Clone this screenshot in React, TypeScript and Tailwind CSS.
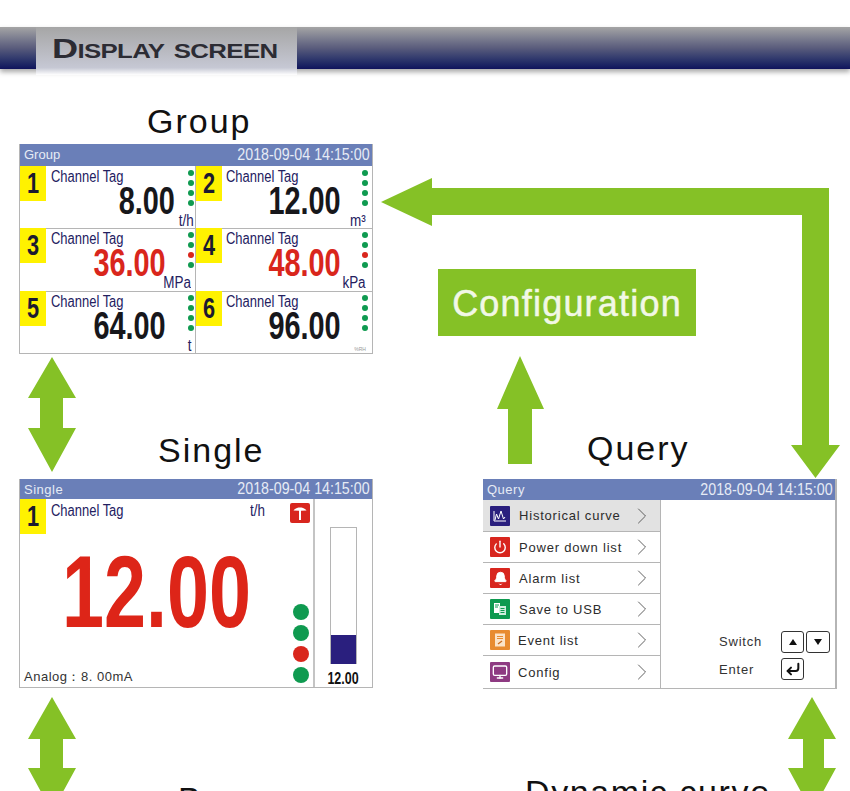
import { Bell, ChevronRight, CornerDownLeft, Monitor, Power } from "lucide-react"
import type { ReactNode } from "react"

const sans = "font-['Liberation_Sans',Arial,sans-serif]"

const cells = [
  { n: "1", value: "8.00", unit: "t/h", red: false, pad: "pr-[11px]", unitPad: "-mr-[8px]", dots: ["g", "g", "g", "g"], h: "h-[62px]", line: "" },
  { n: "2", value: "12.00", unit: "m³", red: false, pad: "pr-[21px]", unitPad: "-mr-[4px]", dots: ["g", "g", "g", "g"], h: "h-[62px]", line: "" },
  { n: "3", value: "36.00", unit: "MPa", red: true, pad: "pr-[20px]", unitPad: "-mr-[5px]", dots: ["g", "g", "r", "g"], h: "h-[63px]", line: "border-t border-[#b5b5b5]" },
  { n: "4", value: "48.00", unit: "kPa", red: true, pad: "pr-[21px]", unitPad: "-mr-[4px]", dots: ["g", "g", "r", "g"], h: "h-[63px]", line: "border-t border-[#b5b5b5]" },
  { n: "5", value: "64.00", unit: "t", red: false, pad: "pr-[20px]", unitPad: "-mr-[5px]", dots: ["g", "g", "g", "g"], h: "h-[62px]", line: "border-t border-[#b5b5b5]" },
  { n: "6", value: "96.00", unit: "%RH", red: false, pad: "pr-[21px]", unitPad: "-mr-[4px]", dots: ["g", "g", "g", "g"], h: "h-[62px]", line: "border-t border-[#b5b5b5]" },
]

const menu: { label: string; color: string; icon: ReactNode; active?: boolean; h: string; shift?: string }[] = [
  {
    label: "Historical curve",
    color: "bg-[#2a1f7e]",
    active: true,
    h: "h-[32px]",
    icon: (
      <svg viewBox="0 0 20 20" className="size-5" fill="none" stroke="#fff" strokeWidth="1">
        <path d="M4 5v10h12" />
        <path d="M5 14l1.500-6 2 5 2.500-8 2.500 8 1.500-2" />
      </svg>
    ),
  },
  {
    label: "Power down list",
    color: "bg-[#d8261e]",
    h: "h-[31px]",
    icon: <Power className="size-[14px] text-white" strokeWidth={2.4} />,
  },
  {
    label: "Alarm list",
    color: "bg-[#d8261e]",
    h: "h-[31px]",
    icon: <Bell className="size-[15px] fill-white text-white" strokeWidth={1.5} />,
  },
  {
    label: "Save to USB",
    color: "bg-[#0e9a50]",
    h: "h-[31px]",
    icon: (
      <svg viewBox="0 0 20 20" className="size-5">
        <rect x="4" y="4" width="6" height="10" fill="#fff" />
        <rect x="9" y="7" width="7" height="9" fill="#cfeedd" />
        <path d="M5 6h4M5 8h3M10.500 9.500h4M10.500 11.500h4M10.500 13.500h4" stroke="#0e9a50" strokeWidth="1" />
      </svg>
    ),
  },
  {
    label: "Event list",
    color: "bg-[#e88b30]",
    h: "h-[31px]",
    shift: "-translate-x-[1px]",
    icon: (
      <svg viewBox="0 0 20 20" className="size-5">
        <rect x="5" y="3.500" width="10" height="13" fill="#fbe3c8" />
        <path d="M7 6.500h6M7 8.500h6" stroke="#e88b30" strokeWidth="1" />
        <path d="M8 14l4-3" stroke="#c9681a" strokeWidth="1.200" />
      </svg>
    ),
  },
  {
    label: "Config",
    color: "bg-[#8e3a82]",
    h: "h-[32px]",
    shift: "-translate-x-[1px]",
    icon: <Monitor className="size-[16px] text-white" strokeWidth={2} />,
  },
]

function TitleBar({ title, h, titleClass }: { title: string; h: string; titleClass: string }) {
  return (
    <div className={`flex items-center justify-between bg-[#6a7fb8] pr-[2px] pl-[4px] text-[#e6ebf5] ${h}`}>
      <span className={`${sans} ${titleClass}`}>{title}</span>
      <span className={`${sans} inline-block origin-right scale-x-[0.89] text-[16px] whitespace-nowrap`}>2018-09-04 14:15:00</span>
    </div>
  )
}

function Badge({ n }: { n: string }) {
  return (
    <div className="flex h-[35px] w-[26px] shrink-0 items-center justify-center bg-[#fff200]">
      <span className={`${sans} inline-block scale-x-75 text-[29px] font-bold text-[#1c1a30]`}>{n}</span>
    </div>
  )
}

function Tag() {
  return (
    <span className={`${sans} inline-block origin-left scale-x-[0.81] text-[16px] leading-[18px] whitespace-nowrap text-[#23205f]`}>
      Channel Tag
    </span>
  )
}

function Cell({ cell, right }: { cell: (typeof cells)[number]; right: boolean }) {
  return (
    <div className={`${cell.h} ${cell.line} ${right ? "" : "border-r border-r-[#b5b5b5]"}`}>
      <div className={`flex h-full ${cell.line ? "-mt-[1px]" : ""}`}>
        <Badge n={cell.n} />
        <div className={`flex min-w-0 flex-1 flex-col ${right ? "pl-[4px]" : "pl-[5px]"}`}>
          <div className="-mt-[2px] h-[19px]">
            <Tag />
          </div>
          <div className={`h-[30px] text-right ${cell.pad}`}>
            <span
              className={`inline-block origin-right scale-x-[0.74] ${sans} text-[39px] leading-[36px] font-bold ${cell.red ? "text-[#d9261c]" : "text-[#17171b]"}`}
            >
              {cell.value}
            </span>
          </div>
          <div className={`mt-auto pb-[1px] text-right leading-[14px] ${cell.unitPad}`}>
            <span
              className={`${sans} inline-block origin-right scale-x-[0.84] ${cell.n === "6" ? "text-[6px] text-[#999]" : "text-[16px] text-[#23205f]"}`}
            >
              {cell.unit}
            </span>
          </div>
        </div>
        <div className={`flex shrink-0 flex-col gap-[4px] pt-[4px] ${right ? "w-[10px]" : "w-[9px] pl-[2px]"}`}>
          {cell.dots.map((d, i) => (
            <div key={i} className={`size-[6px] rounded-full ${d === "r" ? "bg-[#d9261c]" : "bg-[#0f9a50]"}`} />
          ))}
        </div>
      </div>
    </div>
  )
}

function GroupScreen() {
  return (
    <div className="absolute top-[144px] left-[19px] w-[354px] border-x border-b border-[#b5b5b5] bg-white">
      <TitleBar title="Group" h="h-[22px]" titleClass="text-[13px]" />
      <div className="grid grid-cols-[176px_176px]">
        {cells.map((c, i) => (
          <Cell key={c.n} cell={c} right={i % 2 === 1} />
        ))}
      </div>
    </div>
  )
}

function SingleScreen() {
  return (
    <div className="absolute top-[479px] left-[19px] w-[354px] border-x border-b border-[#b5b5b5] bg-white">
      <TitleBar title="Single" h="h-[20px]" titleClass="text-[13px] tracking-[0.5px] pt-[1px]" />
      <div className="flex h-[188px]">
        <div className="flex w-[295px] flex-col border-r-2 border-[#c4c4c4]">
          <div className="flex h-[35px]">
            <Badge n="1" />
            <div className="-mt-[1px] w-[204px] pl-[5px]">
              <Tag />
            </div>
            <div className="-mt-[1px] w-[40px]">
              <span className={`${sans} inline-block origin-left scale-x-[0.84] text-[16px] leading-[18px] text-[#23205f]`}>t/h</span>
            </div>
            <div className="mt-[4px] flex size-[20px] items-center justify-center rounded-[2px] bg-[#d8261e]">
              <svg viewBox="0 0 20 20" className="size-5" fill="#fff">
                <path d="M3.500 7.500c2-2.500 4.500-3 6.500-3s4.500 .5 6.500 3l-5.500 .3V17H9V7.800z" />
              </svg>
            </div>
          </div>
          <div className="flex min-h-0 flex-1">
            <div className="flex min-w-0 flex-1 flex-col">
              <div className="mt-[8px] h-[100px] pl-[42px]">
                <span className={`inline-block origin-left scale-x-[0.74] ${sans} text-[102px] leading-[100px] font-bold text-[#dd2518]`}>
                  12.00
                </span>
              </div>
              <div className={`${sans} mt-auto pb-[3px] pl-[4px] text-[13px] leading-[15px] tracking-[0.5px] text-[#333]`}>Analog：8. 00mA</div>
            </div>
            <div className="flex w-[24px] shrink-0 flex-col gap-[5px] pt-[70px] pl-[4px]">
              {["g", "g", "r", "g"].map((d, i) => (
                <div key={i} className={`size-[16px] rounded-full ${d === "r" ? "bg-[#d9261c]" : "bg-[#0f9a50]"}`} />
              ))}
            </div>
          </div>
        </div>
        <div className="flex flex-1 flex-col items-center pt-[28px]">
          <div className="flex h-[137px] w-[27px] flex-col justify-end border-x border-t border-[#b5b5b5]">
            <div className="h-[29px] bg-[#2a1f7e]" />
          </div>
          <div className="mt-[6px] leading-[16px]">
            <span className={`${sans} inline-block scale-x-[0.78] text-[16px] font-bold text-[#111]`}>12.00</span>
          </div>
        </div>
      </div>
    </div>
  )
}

function QueryScreen() {
  return (
    <div className="absolute top-[479px] left-[483px] w-[354px] border-r-2 border-b border-[#b5b5b5] bg-white">
      <TitleBar title="Query" h="h-[21px]" titleClass="text-[13px] tracking-[0.5px]" />
      <div className="flex h-[188px]">
        <div className="w-[178px] border-r border-[#b5b5b5]">
          {menu.map((m) => (
            <div
              key={m.label}
              className={`flex items-center border-b border-[#b5b5b5] pl-[7px] last:border-b-0 ${m.h} ${m.active ? "bg-[#e2e2e2]" : "bg-white"}`}
            >
              <div className={`flex size-5 shrink-0 items-center justify-center rounded-[1px] ${m.color}`}>{m.icon}</div>
              <span className={`${sans} ml-[9px] w-[113px] pt-[1px] text-[13px] tracking-[0.8px] whitespace-nowrap text-[#2c2c2c] ${m.shift ?? ""}`}>{m.label}</span>
              <ChevronRight className="-ml-[4px] size-[28px] text-[#555]" strokeWidth={0.8} />
            </div>
          ))}
        </div>
        <div className="flex flex-1 flex-col items-end justify-end gap-[5px] pr-[5px] pb-[8px]">
          <div className="flex items-center">
            <span className={`${sans} w-[62px] text-[13px] tracking-[0.8px] text-[#333]`}>Switch</span>
            <div className="flex gap-[2px]">
              <div className="flex h-[22px] w-[23px] items-center justify-center rounded-[3px] border-[1.5px] border-[#333]">
                <div className="size-0 border-x-[4px] border-b-[6px] border-x-transparent border-b-[#111]" />
              </div>
              <div className="flex h-[22px] w-[24px] items-center justify-center rounded-[3px] border-[1.5px] border-[#333]">
                <div className="size-0 border-x-[4px] border-t-[6px] border-x-transparent border-t-[#111]" />
              </div>
            </div>
          </div>
          <div className="flex items-center pr-[26px]">
            <span className={`${sans} w-[62px] pt-[2px] text-[13px] tracking-[0.8px] text-[#333]`}>Enter</span>
            <div className="flex h-[22px] w-[23px] items-center justify-center rounded-[3px] border-[1.5px] border-[#333]">
              <CornerDownLeft className="size-[16px] text-[#111]" strokeWidth={3} />
            </div>
          </div>
        </div>
      </div>
    </div>
  )
}

function Title({ text, pos }: { text: string; pos: string }) {
  return (
    <div className={`absolute ${pos} ${sans} text-[34px] leading-[38px] whitespace-nowrap text-[#111]`}>
      {text}
    </div>
  )
}

export default function App() {
  return (
    <div className="relative h-[791px] w-[850px] overflow-hidden bg-white">
      {/* banner */}
      <div className="absolute top-[27px] left-0 h-[42px] w-full bg-gradient-to-b from-[#a5a5a5] via-[#5a5c7c] to-[#10125c] shadow-[0_3px_5px_rgba(0,0,0,0.35)]" />
      <div className="absolute top-[27px] left-[36px] h-[48px] w-[261px] bg-gradient-to-b from-[#a6a6a6] via-[#c6c8d4] via-[85%] to-white pt-[6px] pl-[16px]">
        <span className={`${sans} inline-block origin-left scale-x-[1.29] text-[28px] leading-[32px] font-bold tracking-[-0.5px] whitespace-nowrap text-[#2c2c34] [font-variant:small-caps]`}>
          Display screen
        </span>
      </div>

      <Title text="Group" pos="top-[102px] left-[147px] tracking-[2px]" />
      <Title text="Single" pos="top-[431px] left-[158px] tracking-[2px]" />
      <Title text="Query" pos="top-[429px] left-[587px] tracking-[2px]" />
      <Title text="Bar" pos="top-[780px] left-[178px] tracking-[2px]" />
      <Title text="Dynamic curve" pos="top-[773px] left-[525px] tracking-[1.6px]" />

      <GroupScreen />
      <SingleScreen />
      <QueryScreen />

      <div className={`absolute top-[269px] left-[438px] flex h-[67px] w-[258px] items-center justify-center bg-[#85c126] pt-[2px] ${sans} text-[36px] tracking-[1.2px] text-[#f2f8e6] [-webkit-text-stroke:0.5px_#f2f8e6]`}>
        Configuration
      </div>

      {/* flow arrows */}
      <svg className="absolute top-0 left-0" width="850" height="791" fill="#85c126">
        <path d="M381 202 432 178V188H829V445H840L815.500 478 791 445H802V215H432V226Z" />
        <path d="M520 356 544 409H532V464H508V409H497Z" />
        <path d="M52 357 76 398H63V428H76L52 472 28 428H40V398H28Z" />
        <path d="M52 697 76 739H63V768H76L52 812 28 768H40V739H28Z" />
        <path d="M812 697 836 739H824V768H836L812 812 788 768H803V739H788Z" />
      </svg>
    </div>
  )
}
